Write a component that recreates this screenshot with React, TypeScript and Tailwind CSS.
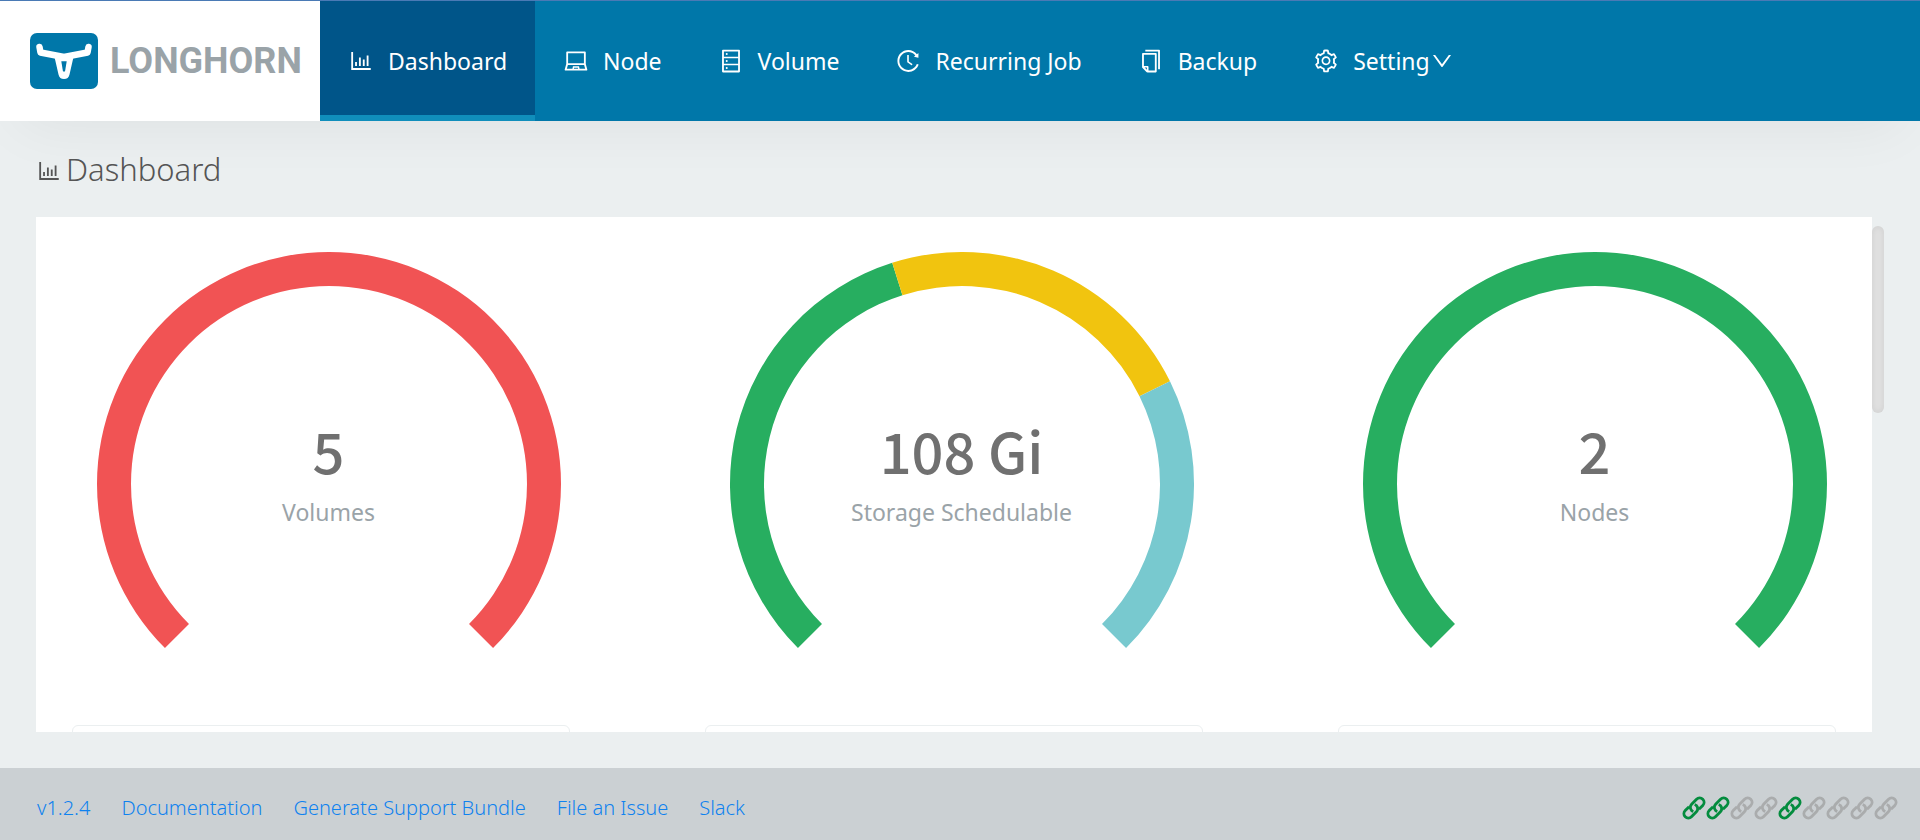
import { AiOutlineBarChart, AiOutlineCopy, AiOutlineDatabase, AiOutlineDown, AiOutlineHistory, AiOutlineLaptop, AiOutlineSetting } from 'react-icons/ai';
import type { IconType } from 'react-icons';

type Segment = { from: number; to: number; color: string };
type GaugeData = { value: string; label: string; segments: Segment[] };

const navItems: { label: string; icon: IconType; active?: boolean; menu?: boolean }[] = [
  { label: 'Dashboard', icon: AiOutlineBarChart, active: true },
  { label: 'Node', icon: AiOutlineLaptop },
  { label: 'Volume', icon: AiOutlineDatabase },
  { label: 'Recurring Job', icon: AiOutlineHistory },
  { label: 'Backup', icon: AiOutlineCopy },
  { label: 'Setting', icon: AiOutlineSetting, menu: true },
];

const gauges: GaugeData[] = [
  { value: '5', label: 'Volumes', segments: [{ from: -135, to: 135, color: '#f15354' }] },
  {
    value: '108 Gi',
    label: 'Storage Schedulable',
    segments: [
      { from: -135, to: -17.5, color: '#27ae60' },
      { from: -17.5, to: 63.7, color: '#f1c40f' },
      { from: 63.7, to: 135, color: '#78c9cf' },
    ],
  },
  { value: '2', label: 'Nodes', segments: [{ from: -135, to: 135, color: '#27ae60' }] },
];

const footerLinks = ['v1.2.4', 'Documentation', 'Generate Support Bundle', 'File an Issue', 'Slack'];
const connections = [true, true, false, false, true, false, false, false, false];

const OUTER = 232;
const INNER = 198;

function point(radius: number, degrees: number) {
  const a = (degrees * Math.PI) / 180;
  return `${OUTER + radius * Math.sin(a)} ${OUTER - radius * Math.cos(a)}`;
}

function arc({ from, to }: Segment) {
  const large = to - from > 180 ? 1 : 0;
  return `M${point(OUTER, from)}A${OUTER} ${OUTER} 0 ${large} 1 ${point(OUTER, to)}L${point(INNER, to)}A${INNER} ${INNER} 0 ${large} 0 ${point(INNER, from)}Z`;
}

function Gauge({ value, label, segments }: GaugeData) {
  return (
    <div className="flex flex-col">
      <div className="relative ml-[15px] self-center">
        <svg viewBox="0 0 464 464" className="block w-[464px]" aria-hidden="true">
          {segments.map((s) => (
            <path key={s.from} d={arc(s)} fill={s.color} />
          ))}
        </svg>
        <div className="absolute inset-0 flex flex-col items-center pt-40">
          <div className="font-['Noto_Sans_CJK_TC',sans-serif] text-[56px] leading-[76px] font-medium text-[#707070]">{value}</div>
          <div className="text-[23px] leading-[48px] text-[#9aa3a8]">{label}</div>
        </div>
      </div>
      <div className="mt-[9px] h-40 rounded-md border border-[#ebeff0]" />
    </div>
  );
}

function ChainIcon({ on }: { on: boolean }) {
  return (
    <svg
      viewBox="0 0 24 24"
      className={on ? 'size-6 text-[#048c3e]' : 'size-6 text-[#aaacad]'}
      fill="none"
      stroke="currentColor"
      strokeWidth="2.9"
      aria-hidden="true"
    >
      <g transform="rotate(-45 12 12)">
        <path d="M9.500 7.600H4a4.400 4.400 0 0 0 0 8.800H11a4.400 4.400 0 0 0 4.400-4.400q0-1-.400-2" />
        <path d="M14.500 16.400H20a4.400 4.400 0 0 0 0-8.800H13a4.400 4.400 0 0 0-4.400 4.400q0 1 .400 2" />
      </g>
    </svg>
  );
}

function Logo() {
  return (
    <a href="#" className="flex w-80 items-center gap-3 bg-white pl-[30px]">
      <svg viewBox="0 0 68 56" className="h-14 w-[68px]" aria-hidden="true">
        <rect width="68" height="56" rx="7" fill="#0077a9" />
        <path d="M9.500 14l1 5.500L34 24L57.500 19.500l1-5.500" fill="none" stroke="#fff" strokeWidth="6.500" strokeLinecap="round" strokeLinejoin="round" />
        <path d="M24.500 24h19l-4 17.500q-1 4.500-5.500 4.500t-5.500-4.500z" fill="#fff" />
        <path d="M31.300 28.300h5.400l-1.600 9.700q-1.100 1.500-2.200 0z" fill="#0077a9" />
      </svg>
      <span className="font-['Roboto',sans-serif] text-[36px] leading-none font-bold text-[#9aa3a8]">LONGHORN</span>
    </a>
  );
}

export default function App() {
  return (
    <div className="flex h-screen flex-col bg-[#ebeff0] font-['Noto_Sans',sans-serif]">
      <header className="z-10 flex h-[121px] shrink-0 border-t border-[#4a7ab5] bg-[#0077a9] shadow-[0_24px_60px_-20px_rgba(0,0,0,0.06)]">
        <Logo />
        <nav className="flex text-[23px] text-white">
          {navItems.map(({ label, icon: Icon, active, menu }) => (
            <a
              key={label}
              href="#"
              className={
                active
                  ? 'flex items-center border-b-[6px] border-[#108ebb] bg-[#005589] px-7 pt-[6px]'
                  : 'flex items-center px-7'
              }
            >
              <Icon className="mr-[14px] size-[26px]" />
              {label}
              {menu && <AiOutlineDown className="size-6" />}
            </a>
          ))}
        </nav>
      </header>

      <main className="flex min-h-0 flex-1 flex-col px-9 pb-9">
        <h1 className="flex h-24 shrink-0 items-center gap-1 text-[31px] font-light text-[#555]">
          <AiOutlineBarChart className="mt-1 size-[26px]" />
          Dashboard
        </h1>
        <div className="flex min-h-0 flex-1">
          <section className="grid min-w-0 flex-1 grid-cols-3 gap-x-[135px] overflow-hidden bg-white px-9 pt-[35px]">
            {gauges.map((g) => (
              <Gauge key={g.label} {...g} />
            ))}
          </section>
          <div className="w-3 shrink-0 pt-[9px]">
            <div className="h-[187px] rounded-full bg-[#e0e0e0] shadow-[inset_0_0_6px_rgba(0,0,0,0.08)]" />
          </div>
        </div>
      </main>

      <footer className="flex h-[72px] shrink-0 items-center justify-between bg-[#cbd0d3] pt-2 pr-[22px] pl-[37px]">
        <div className="flex gap-[31px] text-[20px] font-light text-[#0f82ef]">
          {footerLinks.map((text) => (
            <a key={text} href="#">
              {text}
            </a>
          ))}
        </div>
        <div className="flex">
          {connections.map((on, i) => (
            <ChainIcon key={i} on={on} />
          ))}
        </div>
      </footer>
    </div>
  );
}
